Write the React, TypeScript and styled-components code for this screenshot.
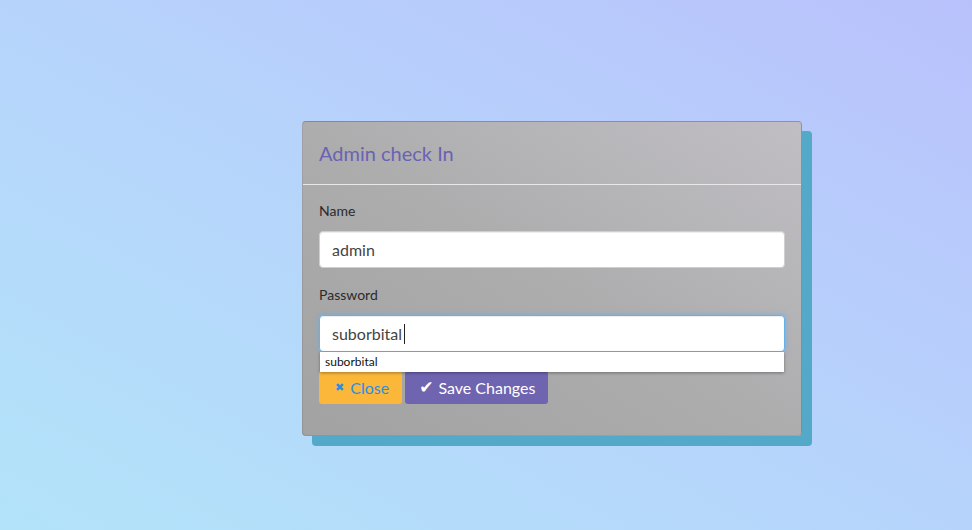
import React from "react";
import styled, { createGlobalStyle } from "styled-components";

const Global = createGlobalStyle`
  html, body { margin: 0; padding: 0; }
  body {
    width: 972px;
    height: 530px;
    overflow: hidden;
    font-family: Lato, "Open Sans", sans-serif;
    background: linear-gradient(to top right, #b2e3f9 0%, #b6d4fb 50%, #b9c1fb 100%);
  }
  * { box-sizing: border-box; }
`;

const Page = styled.div`
  width: 972px;
  height: 530px;
  display: flex;
  align-items: flex-start;
  padding: 121px 0 0 302px;
`;

const Card = styled.div`
  width: 500px;
  border: 1px solid rgba(0, 0, 0, 0.15);
  border-radius: 4px;
  background: linear-gradient(to top right, #a2a2a2 0%, #adadae 50%, #c0bec3 100%);
  box-shadow: 10px 10px 0 #54a9c8;
`;

const Header = styled.div`
  height: 63px;
  padding: 0 16px;
  display: flex;
  align-items: center;
  border-bottom: 1px solid #e8e8e8;
`;

const Title = styled.h4`
  margin: 0;
  font-size: 20px;
  font-weight: 400;
  color: #6a62b4;
`;

const Body = styled.div`
  padding: 16px 16px 31px 16px;
`;

const Group = styled.div<{ $gap: number }>`
  position: relative;
  display: flex;
  flex-direction: column;
  margin-bottom: ${(p) => p.$gap}px;
`;

const Label = styled.label`
  font-size: 14px;
  line-height: 20px;
  color: #2b2b2b;
  margin-bottom: 10px;
`;

const Input = styled.input<{ $focus?: boolean }>`
  width: 466px;
  height: 37px;
  padding: 0 12px;
  font-family: Lato, sans-serif;
  font-size: 16px;
  color: #444;
  background: #fff;
  border: 1px solid ${(p) => (p.$focus ? "#66afe9" : "#cfcfcf")};
  border-radius: 4px;
  outline: none;
  box-shadow: ${(p) =>
    p.$focus
      ? "inset 0 1px 1px rgba(0,0,0,.075), 0 0 5px rgba(102,175,233,.85)"
      : "inset 0 1px 1px rgba(0,0,0,.075)"};
`;

const Caret = styled.span`
  position: absolute;
  left: 85px;
  top: 39px;
  width: 1px;
  height: 20px;
  background: #222;
`;

const Suggest = styled.div`
  position: absolute;
  left: 1px;
  top: 67px;
  width: 464px;
  height: 20px;
  background: #fff;
  box-shadow: 0 1px 3px rgba(0, 0, 0, 0.35);
  font-size: 12px;
  line-height: 20px;
  padding-left: 5px;
  color: #111;
  z-index: 2;
`;

const Actions = styled.div`
  display: flex;
  gap: 3px;
`;

const Button = styled.button<{ $variant: "close" | "save" }>`
  height: 33px;
  padding: ${(p) => (p.$variant === "close" ? "0 13px 0 16px" : "0 13px 0 14px")};
  border: none;
  border-radius: 3px;
  font-family: Lato, sans-serif;
  font-size: 16px;
  display: flex;
  align-items: center;
  gap: ${(p) => (p.$variant === "close" ? "6px" : "5px")};
  background: ${(p) => (p.$variant === "close" ? "#fbb73a" : "#6e64b0")};
  color: ${(p) => (p.$variant === "close" ? "#2b8ee6" : "#ffffff")};
`;

const Icon = styled.span<{ $size: number }>`
  font-family: "DejaVu Sans", sans-serif;
  font-size: ${(p) => p.$size}px;
  line-height: 1;
`;

export default function App() {
  return (
    <>
      <Global />
      <Page>
        <Card>
          <Header>
            <Title>Admin check In</Title>
          </Header>
          <Body>
            <Group $gap={17}>
              <Label>Name</Label>
              <Input readOnly value="admin" />
            </Group>
            <Group $gap={19}>
              <Label>Password</Label>
              <Input readOnly $focus value="suborbital" />
              <Caret />
              <Suggest>suborbital</Suggest>
            </Group>
            <Actions>
              <Button $variant="close">
                <Icon $size={11}>✖</Icon>Close
              </Button>
              <Button $variant="save">
                <Icon $size={17}>✔</Icon>Save Changes
              </Button>
            </Actions>
          </Body>
        </Card>
      </Page>
    </>
  );
}
